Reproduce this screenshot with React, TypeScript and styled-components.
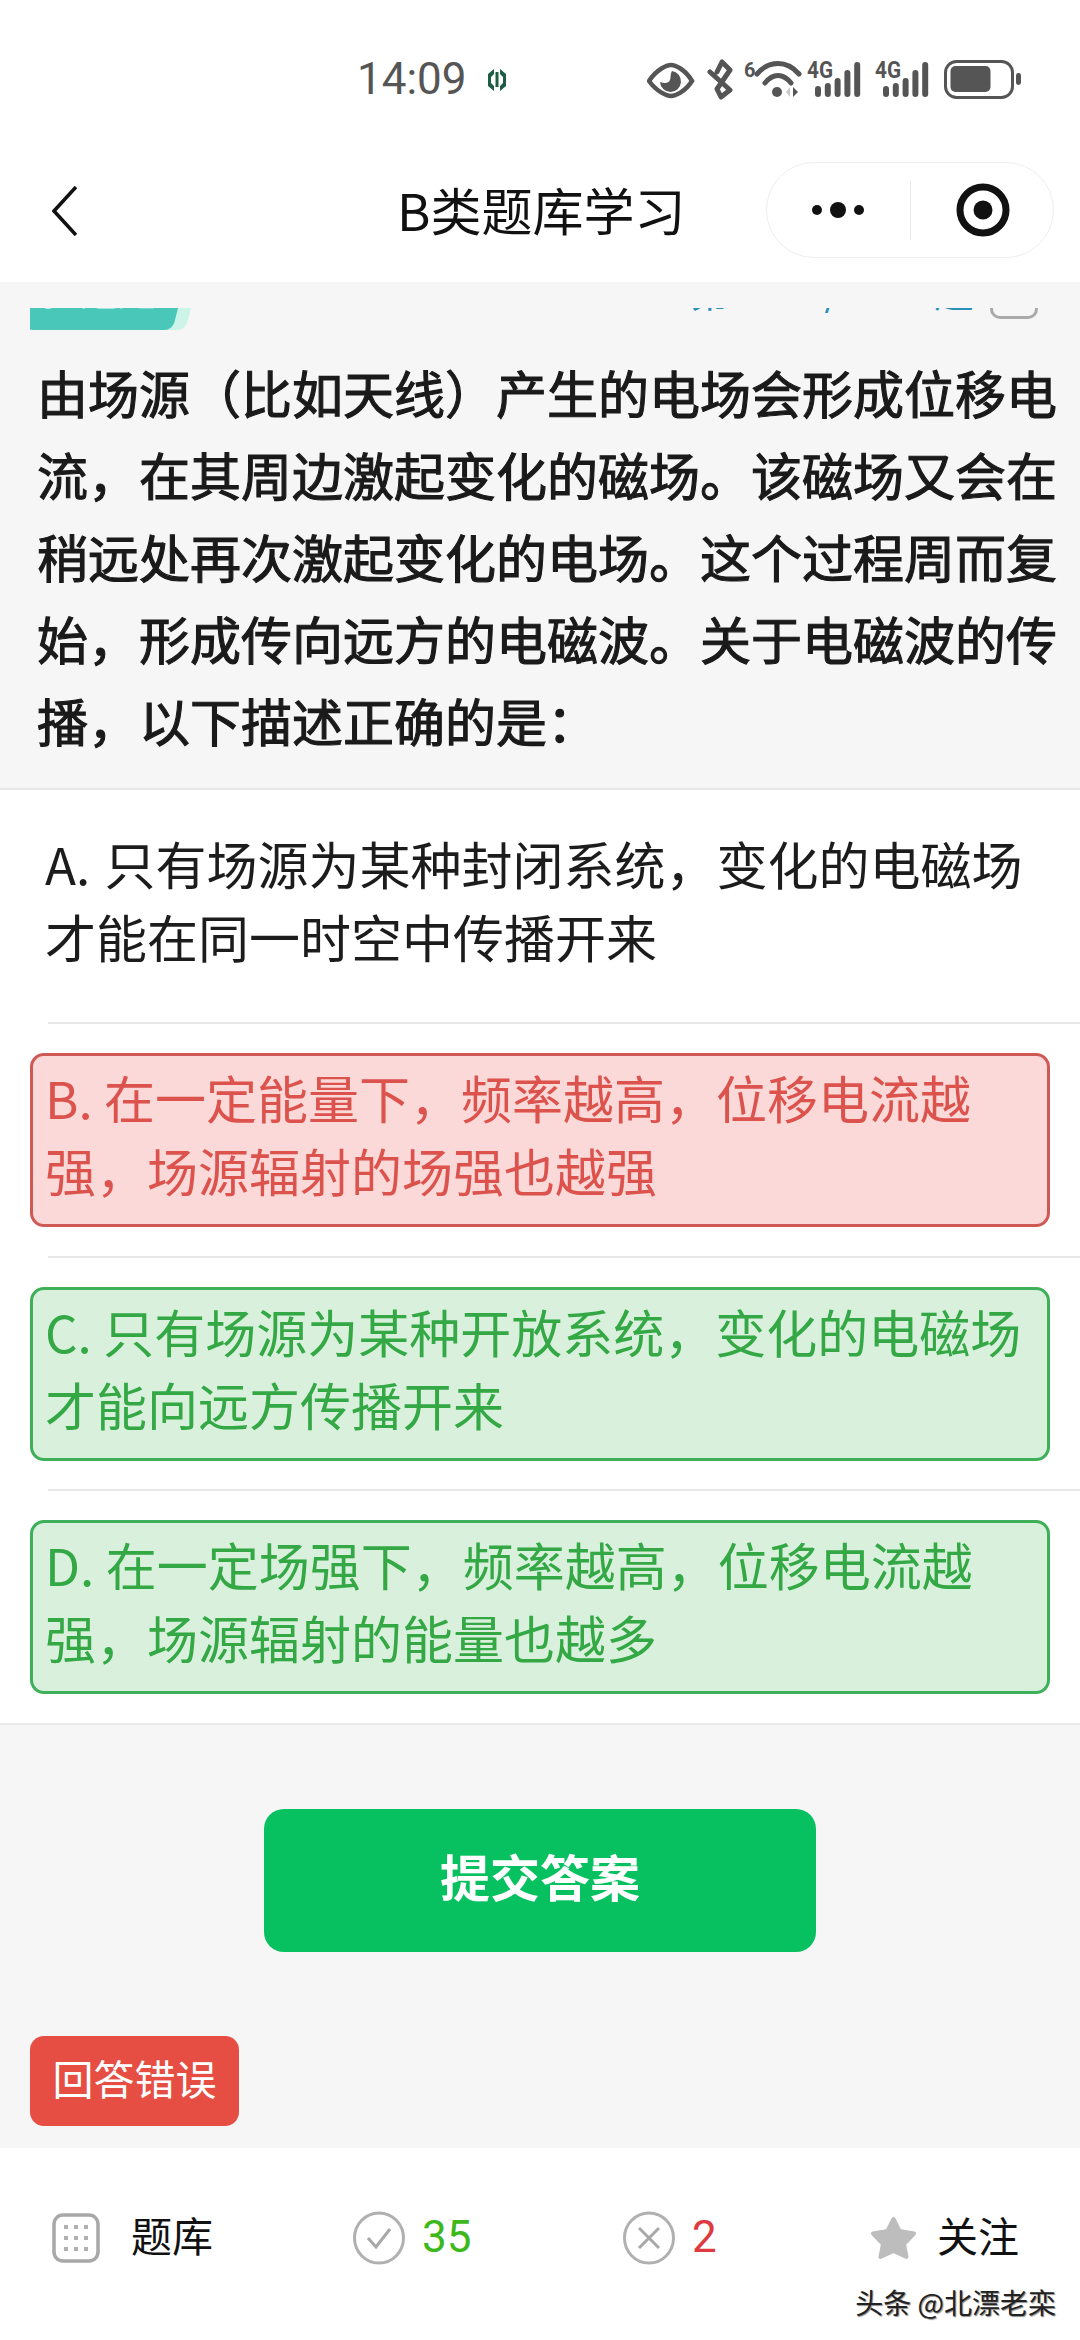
import React from "react"
import styled, { createGlobalStyle } from "styled-components"

const GlobalStyle = createGlobalStyle`
  html, body {
    margin: 0;
    padding: 0;
    background: #f6f6f6;
  }
  * {
    box-sizing: border-box;
  }
  body {
    font-family: "Noto Sans CJK SC", "Noto Sans", sans-serif;
  }
`

const Page = styled.div`
  width: 1080px;
  height: 2340px;
  display: flex;
  flex-direction: column;
  overflow: hidden;
  background: #f6f6f6;
`

const StatusBar = styled.div`
  height: 150px;
  padding: 59px 0 0 357px;
  display: flex;
  align-items: flex-start;
  background: #fff;
`

const Clock = styled.div`
  width: 128px;
  font-family: Roboto, sans-serif;
  font-size: 44px;
  line-height: 40px;
  color: #555;
`

const ClockLogo = styled.svg`
  width: 24px;
  height: 24px;
  margin-top: 9px;
`

const StatusIcons = styled.svg`
  display: block;
  width: 376px;
  height: 42px;
  margin-left: 138px;
`

const NavBar = styled.div`
  height: 132px;
  padding: 12px 26px 0 52px;
  display: flex;
  align-items: flex-start;
  background: #fff;
`

const BackIcon = styled.svg`
  width: 25px;
  height: 50px;
  margin-top: 24px;
`

const NavTitle = styled.div`
  margin-left: 320px;
  font-size: 51px;
  line-height: 95px;
  color: #111;
  white-space: nowrap;
`

const Capsule = styled.div`
  width: 288px;
  height: 96px;
  margin-left: auto;
  display: flex;
  align-items: center;
  border: 1.5px solid #eeeeee;
  border-radius: 48px;
  background: #fff;
`

const CapsuleHalf = styled.div<{ $divided?: boolean }>`
  width: 144px;
  height: 58px;
  padding-left: ${(p) => (p.$divided ? "3px" : "0")};
  display: flex;
  align-items: center;
  justify-content: center;
  border-left: ${(p) => (p.$divided ? "1.5px solid #e8e8e8" : "none")};
`

const QuestionBlock = styled.div`
  height: 508px;
  flex-shrink: 0;
  padding: 0 0 0 37px;
  border-bottom: 2px solid #e7e7e7;
`

const MetaRow = styled.div`
  height: 69px;
  padding-top: 26px;
  margin: 0 0 0 -7px;
  display: flex;
  align-items: flex-start;
  overflow: hidden;
`

const Tag = styled.div`
  width: 148px;
  height: 22px;
  padding-left: 12px;
  border-radius: 0 0 8px 8px;
  background: #49c7b9;
  transform: skewX(-14deg);
  transform-origin: top left;
  box-shadow: 13px 0 0 #cdf4e9;
  overflow: hidden;
`

const TagText = styled.div`
  margin-top: -19px;
  font-size: 38px;
  line-height: 1px;
  color: #e8fbf7;
  white-space: nowrap;
`

const MetaCount = styled.div`
  margin-left: 512px;
  width: 284px;
  height: 5px;
  overflow: hidden;
  display: flex;
  justify-content: space-between;
`

const MetaGlyph = styled.span`
  display: block;
  margin-top: -18px;
  color: #2a8fb8;
  font-size: 40px;
  line-height: 1px;
`

const MarkBox = styled.div`
  width: 48px;
  height: 11px;
  margin-left: 16px;
  border: 3px solid #aaa;
  border-top: none;
  border-radius: 0 0 10px 10px;
`

const QuestionText = styled.div`
  font-size: 51px;
  line-height: 82px;
  -webkit-text-stroke: 1.1px #1a1a1a;
  color: #1a1a1a;
  white-space: nowrap;
`

const OptionList = styled.div`
  flex-shrink: 0;
  height: 935px;
  display: flex;
  flex-direction: column;
  background: #fff;
  border-bottom: 2px solid #e9e9e9;
`

const OptionCell = styled.div<{ $first?: boolean }>`
  height: ${(p) => (p.$first ? "232px" : "234px")};
  padding-top: ${(p) => (p.$first ? "0" : "29px")};
  display: flex;
  flex-direction: column;
`

const Divider = styled.div`
  height: 2px;
  margin-left: 48px;
  background: #e8e8e8;
  flex-shrink: 0;
`

const OptionBox = styled.div<{ $state?: "wrong" | "right" }>`
  width: ${(p) => (p.$state ? "1020px" : "1040px")};
  height: ${(p) => (p.$state ? "174px" : "232px")};
  margin-left: 30px;
  padding: ${(p) => (p.$state ? "5px 0 0 12px" : "37px 0 0 15px")};
  font-size: 51px;
  line-height: 73px;
  word-spacing: ${(p) => (p.$state ? "0" : "3px")};
  border-radius: 14px;
  border: ${(p) =>
    p.$state === "wrong"
      ? "3px solid #cf5a55"
      : p.$state === "right"
        ? "3px solid #3fb05a"
        : "none"};
  background: ${(p) =>
    p.$state === "wrong" ? "#fad9d8" : p.$state === "right" ? "#d8f0dc" : "#fff"};
  color: ${(p) =>
    p.$state === "wrong" ? "#dc524d" : p.$state === "right" ? "#33a845" : "#1c1c1c"};
  white-space: nowrap;
`

const SubmitRow = styled.div`
  flex-shrink: 0;
  height: 311px;
  padding: 84px 0 0 264px;
`

const SubmitButton = styled.button`
  width: 552px;
  height: 143px;
  padding: 0 0 12px;
  border: none;
  border-radius: 20px;
  background: #07c160;
  color: #fff;
  font-family: inherit;
  font-size: 50px;
  font-weight: 700;
`

const ResultTag = styled.div`
  width: 209px;
  height: 90px;
  margin-left: 30px;
  flex-shrink: 0;
  border-radius: 14px;
  background: #e64e44;
  color: #fff;
  font-size: 41px;
  line-height: 82px;
  text-align: center;
`

const Footer = styled.div`
  flex: 1;
  margin-top: 22px;
  position: relative;
  padding: 63px 0 0 52px;
  display: grid;
  grid-template-columns: 301px 270px 247px 1fr;
  align-items: start;
  background: #fff;
`

const FooterItem = styled.div<{ $gap: number }>`
  height: 54px;
  display: flex;
  align-items: center;
  gap: ${(p) => p.$gap}px;
`

const FooterLabel = styled.span`
  padding-bottom: 9px;
  font-size: 41px;
  line-height: 50px;
  color: #111;
`

const Score = styled.span<{ $color: string }>`
  padding-bottom: 3px;
  font-family: Roboto, sans-serif;
  font-size: 44px;
  line-height: 50px;
  color: ${(p) => p.$color};
`

const Watermark = styled.div`
  position: absolute;
  right: 24px;
  bottom: 21px;
  font-size: 28px;
  line-height: 34px;
  color: #222;
  text-shadow: 1px 1px 1px rgba(0, 0, 0, 0.45);
  white-space: nowrap;
`

const options = [
  {
    text: ["A. 只有场源为某种封闭系统，变化的电磁场", "才能在同一时空中传播开来"],
  },
  {
    state: "wrong" as const,
    text: ["B. 在一定能量下，频率越高，位移电流越", "强，场源辐射的场强也越强"],
  },
  {
    state: "right" as const,
    text: ["C. 只有场源为某种开放系统，变化的电磁场", "才能向远方传播开来"],
  },
  {
    state: "right" as const,
    text: ["D. 在一定场强下，频率越高，位移电流越", "强，场源辐射的能量也越多"],
  },
]

const questionLines = [
  "由场源（比如天线）产生的电场会形成位移电",
  "流，在其周边激起变化的磁场。该磁场又会在",
  "稍远处再次激起变化的电场。这个过程周而复",
  "始，形成传向远方的电磁波。关于电磁波的传",
  "播，以下描述正确的是：",
]

const iconGrey = "#555"

// 4G label plus five signal bars, x is where the label starts
const SimSignal = ({ x }: { x: number }) => (
  <g>
    <text
      x={x}
      y="19"
      fontFamily="Roboto, sans-serif"
      fontSize="23"
      fontWeight="700"
      fill={iconGrey}
      textLength="26"
      lengthAdjust="spacingAndGlyphs"
    >
      4G
    </text>
    {[27, 24, 19, 11, 3].map((top, i) => (
      <rect key={top} x={x + 8 + i * 9.8} y={top} width="6" height={38 - top} rx="3" fill={iconGrey} />
    ))}
  </g>
)

const StatusGlyphs = () => (
  <StatusIcons viewBox="0 0 376 42">
    {/* eye */}
    <path d="M2 22 C10 10 20 6 24 6 C28 6 38 10 45 22 C38 33 28 37 24 37 C20 37 10 33 2 22 Z" fill="none" stroke={iconGrey} strokeWidth="4.5" />
    <path d="M25 12 A10.5 10.5 0 1 1 13 23 C18 25 22 24 23 21 C24 18 23 15 25 12 Z" fill={iconGrey} />
    {/* bluetooth */}
    <path d="M63 13 L83 31 L74 38 L70 30 L83 11 L75 3 L70 13" fill="none" stroke={iconGrey} strokeWidth="5" strokeLinecap="round" strokeLinejoin="round" />
    {/* wifi */}
    <text x="97" y="18" fontFamily="Roboto, sans-serif" fontSize="20" fontWeight="700" fill={iconGrey}>6</text>
    <path d="M110 15 C122 1 140 1 152 15" fill="none" stroke={iconGrey} strokeWidth="5" strokeLinecap="round" />
    <path d="M118 24 C126 14 136 14 144 24" fill="none" stroke={iconGrey} strokeWidth="5" strokeLinecap="round" />
    <circle cx="130" cy="33" r="5" fill={iconGrey} />
    <path d="M143 28 L143 38 L139 33 Z" fill="#c8c8c8" />
    <path d="M146 28 L146 38 L151 33 Z" fill={iconGrey} />
    <SimSignal x={160} />
    <SimSignal x={228} />
    {/* battery */}
    <rect x="298.5" y="2.5" width="67" height="36" rx="11" fill="none" stroke={iconGrey} strokeWidth="3" />
    <rect x="303.5" y="7" width="40" height="26" rx="5" fill={iconGrey} />
    <rect x="369" y="14" width="5" height="12" rx="2.4" fill={iconGrey} />
  </StatusIcons>
)

const App = () => {
  return (
    <Page>
      <GlobalStyle />
      <StatusBar>
        <Clock>14:09</Clock>
        <ClockLogo viewBox="0 0 24 24">
          <path d="M9 1 L3 6 L3 18 L9 23 L9 18 L6 15 L6 9 L9 6 Z" fill="#1d5e43" />
          <path d="M15 1 L21 6 L21 18 L15 23 L15 18 L18 15 L18 9 L15 6 Z" fill="#1d5e43" />
          <rect x="10.5" y="4" width="3" height="15" fill="#1d5e43" />
        </ClockLogo>
        <StatusGlyphs />
      </StatusBar>

      <NavBar>
        <BackIcon viewBox="0 0 25 50">
          <path d="M24 1 L2 25 L24 49" fill="none" stroke="#111" strokeWidth="3.6" />
        </BackIcon>
        <NavTitle>B类题库学习</NavTitle>
        <Capsule>
          <CapsuleHalf>
            <svg width="56" height="20" viewBox="0 0 56 20">
              <circle cx="7" cy="10" r="5" fill="#111" />
              <circle cx="28" cy="10" r="8" fill="#111" />
              <circle cx="49" cy="10" r="5" fill="#111" />
            </svg>
          </CapsuleHalf>
          <CapsuleHalf $divided>
            <svg width="54" height="54" viewBox="0 0 54 54">
              <circle cx="27" cy="27" r="23" fill="none" stroke="#111" strokeWidth="7" />
              <circle cx="27" cy="27" r="9.5" fill="#111" />
            </svg>
          </CapsuleHalf>
        </Capsule>
      </NavBar>

      <QuestionBlock>
        <MetaRow>
          <Tag>
            <TagText>多选题</TagText>
          </Tag>
          <MetaCount>
            <MetaGlyph>第</MetaGlyph>
            <MetaGlyph>/</MetaGlyph>
            <MetaGlyph>题</MetaGlyph>
          </MetaCount>
          <MarkBox />
        </MetaRow>
        <QuestionText>
          {questionLines.map((line) => (
            <div key={line}>{line}</div>
          ))}
        </QuestionText>
      </QuestionBlock>

      <OptionList>
        {options.map((o, idx) => (
          <React.Fragment key={o.text[0]}>
            {idx > 0 && <Divider />}
            <OptionCell $first={idx === 0}>
              <OptionBox $state={o.state}>
                {o.text.map((line) => (
                  <div key={line}>{line}</div>
                ))}
              </OptionBox>
            </OptionCell>
          </React.Fragment>
        ))}
      </OptionList>

      <SubmitRow>
        <SubmitButton>提交答案</SubmitButton>
      </SubmitRow>

      <ResultTag>回答错误</ResultTag>

      <Footer>
        <FooterItem $gap={31}>
          <svg width="48" height="50" viewBox="0 0 48 50">
            <rect x="2" y="2" width="44" height="46" rx="9" fill="none" stroke="#a8a8a8" strokeWidth="3.5" />
            {[14, 25, 36].map((y) =>
              [14, 24, 34].map((x) => (
                <rect key={`${x}-${y}`} x={x - 2} y={y - 2} width="4" height="4" fill="#b0b0b0" />
              )),
            )}
          </svg>
          <FooterLabel>题库</FooterLabel>
        </FooterItem>
        <FooterItem $gap={17}>
          <svg width="52" height="54" viewBox="0 0 52 54">
            <ellipse cx="26" cy="27" rx="24.5" ry="25" fill="none" stroke="#b0b0b0" strokeWidth="3" />
            <path d="M15 27 L23 36 L37 18" fill="none" stroke="#a8a8a8" strokeWidth="3" />
          </svg>
          <Score $color="#3cb81a">35</Score>
        </FooterItem>
        <FooterItem $gap={17}>
          <svg width="52" height="54" viewBox="0 0 52 54">
            <ellipse cx="26" cy="27" rx="24.5" ry="25" fill="none" stroke="#b0b0b0" strokeWidth="3" />
            <path d="M16 17 L36 37 M36 17 L16 37" fill="none" stroke="#a8a8a8" strokeWidth="3" />
          </svg>
          <Score $color="#dd3b3f">2</Score>
        </FooterItem>
        <FooterItem $gap={20}>
          <svg width="47" height="44" viewBox="0 0 47 44">
            <path d="M23.5 3 L29.5 15 L44 17.5 L34 28 L36.5 41 L23.5 35 L10.5 41 L13 28 L3 17.5 L17.5 15 Z" fill="#bdbdbd" stroke="#bdbdbd" strokeWidth="4" strokeLinejoin="round" />
          </svg>
          <FooterLabel>关注</FooterLabel>
        </FooterItem>
        <Watermark>头条 @北漂老栾</Watermark>
      </Footer>
    </Page>
  )
}

export default App
